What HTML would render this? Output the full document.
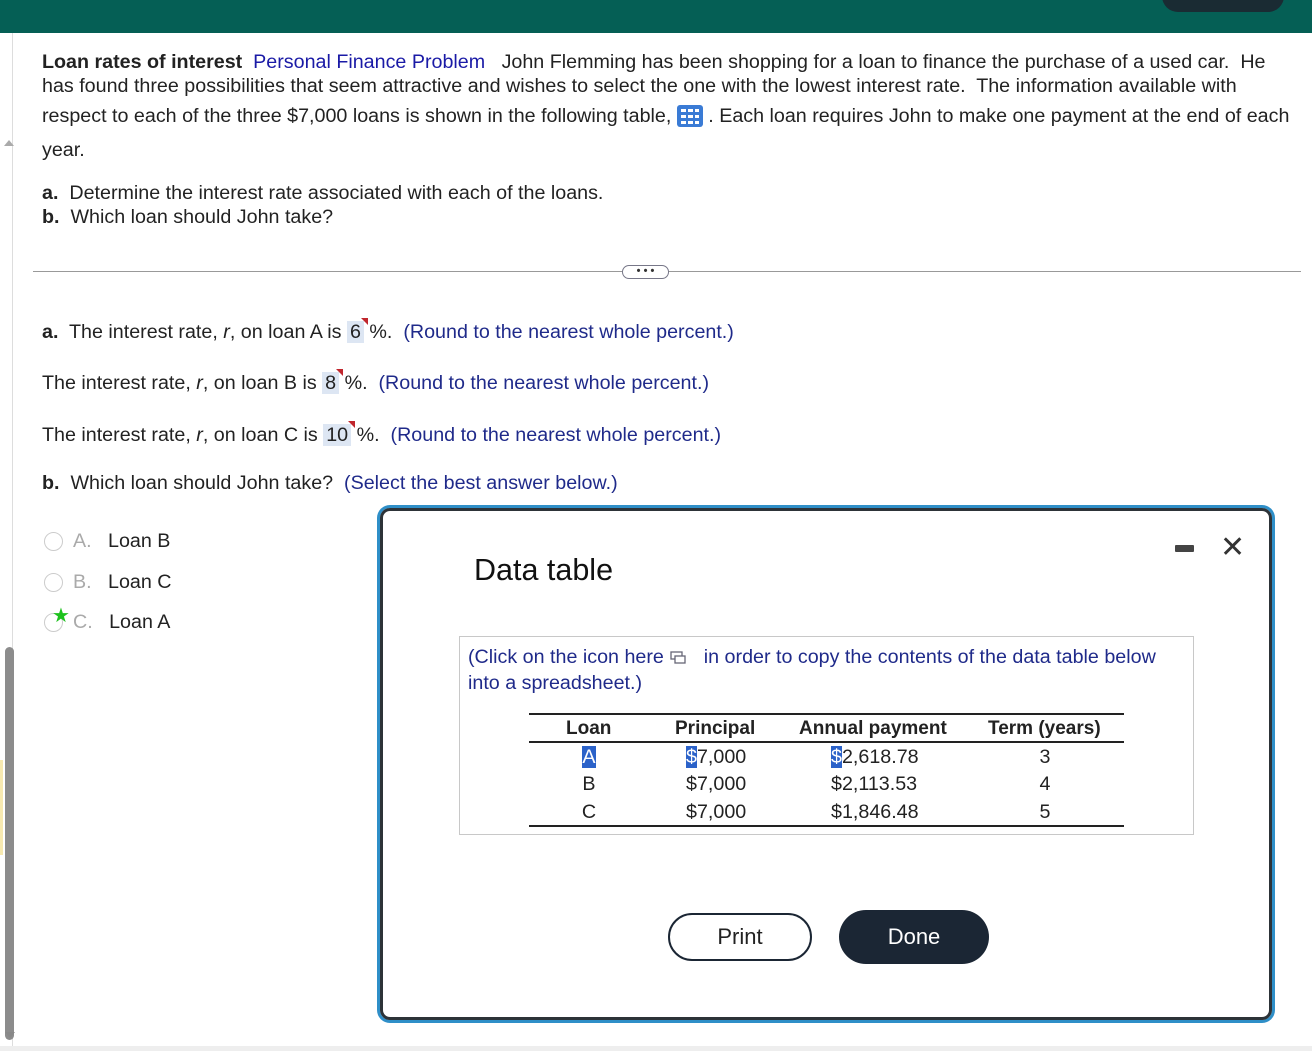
<!DOCTYPE html>
<html><head><meta charset="utf-8"><style>
*{margin:0;padding:0;box-sizing:border-box}
body{width:1312px;height:1051px;position:relative;overflow:hidden;background:#fff;font-family:"Liberation Sans",Arial,sans-serif;color:#222;font-size:19.7px}
.a{position:absolute;white-space:nowrap}
.blue{color:#1a1aa6}
.nb{color:#1f2a8a}
.hl{background:#dde6f3;padding:0 3px;position:relative}
.hl:after{content:"";position:absolute;right:-4px;top:-3px;border-left:7px solid transparent;border-top:7px solid #c0262d}
.sel{background:#2b62c9;color:#fff}
.t{font-size:19px}
</style></head><body>
<div class="a" style="left:0;top:0;width:1312px;height:33px;background:#055f55"></div>
<div class="a" style="left:1162px;top:-20px;width:122px;height:32px;background:#1a2b33;border-radius:16px"></div>
<div class="a" style="left:12px;top:33px;width:1px;height:1018px;background:#ddd"></div>
<div class="a" style="left:5px;top:647px;width:9px;height:393px;background:#8c8c8c;border-radius:5px"></div>
<div class="a" style="left:0;top:760px;width:3px;height:95px;background:#f7e9b0"></div>
<div class="a" style="left:4px;top:140px;width:0;height:0;border-left:5px solid transparent;border-right:5px solid transparent;border-bottom:6px solid #aaa"></div>
<div class="a" style="left:5px;top:1032px;width:0;height:0;border-left:5px solid transparent;border-right:5px solid transparent;border-top:6px solid #888"></div>
<div class="a" style="left:0;top:1046px;width:1312px;height:5px;background:#eee"></div>

<div class="a" style="left:42px;top:51px"><b>Loan rates of interest</b>&nbsp; <span class="blue">Personal Finance Problem</span>&nbsp;&nbsp; John Flemming has been shopping for a loan to finance the purchase of a used car.&nbsp; He</div>
<div class="a" style="left:42px;top:75px">has found three possibilities that seem attractive and wishes to select the one with the lowest interest rate.&nbsp; The information available with</div>
<div class="a" style="left:42px;top:105px">respect to each of the three $7,000 loans is shown in the following table, <span style="display:inline-block;width:26px;height:22px;vertical-align:-5px;background:#3a7bd5;border-radius:3px;position:relative"><svg width="26" height="22" style="position:absolute;left:0;top:0"><g fill="#fff"><rect x="4" y="4" width="5" height="3"/><rect x="11" y="4" width="5" height="3"/><rect x="18" y="4" width="4" height="3"/><rect x="4" y="10" width="5" height="3"/><rect x="11" y="10" width="5" height="3"/><rect x="18" y="10" width="4" height="3"/><rect x="4" y="16" width="5" height="3"/><rect x="11" y="16" width="5" height="3"/><rect x="18" y="16" width="4" height="3"/></g></svg></span> . Each loan requires John to make one payment at the end of each</div>
<div class="a" style="left:42px;top:139px">year.</div>
<div class="a" style="left:42px;top:182px"><b>a.</b>&nbsp; Determine the interest rate associated with each of the loans.</div>
<div class="a" style="left:42px;top:206px"><b>b.</b>&nbsp; Which loan should John take?</div>

<div class="a" style="left:33px;top:271px;width:1268px;height:1px;background:#999"></div>
<div class="a" style="left:622px;top:265px;width:47px;height:14px;border:1px solid #778;border-radius:7px;background:#fff;font-size:11px;line-height:10px;text-align:center;color:#333;font-weight:bold">• • •</div>

<div class="a" style="left:42px;top:321px"><b>a.</b>&nbsp; The interest rate, <i>r</i>, on loan A is <span class="hl">6</span> %.&nbsp; <span class="nb">(Round to the nearest whole percent.)</span></div>
<div class="a" style="left:42px;top:372px">The interest rate, <i>r</i>, on loan B is <span class="hl">8</span> %.&nbsp; <span class="nb">(Round to the nearest whole percent.)</span></div>
<div class="a" style="left:42px;top:424px">The interest rate, <i>r</i>, on loan C is <span class="hl">10</span> %.&nbsp; <span class="nb">(Round to the nearest whole percent.)</span></div>
<div class="a" style="left:42px;top:472px"><b>b.</b>&nbsp; Which loan should John take?&nbsp; <span class="nb">(Select the best answer below.)</span></div>

<div class="a" style="left:44px;top:532px;width:19px;height:19px;border:1.5px solid #ccc;border-radius:50%"></div>
<div class="a" style="left:73px;top:530px"><span style="color:#aaa">A.</span>&nbsp;&nbsp; Loan B</div>
<div class="a" style="left:44px;top:573px;width:19px;height:19px;border:1.5px solid #ccc;border-radius:50%"></div>
<div class="a" style="left:73px;top:571px"><span style="color:#aaa">B.</span>&nbsp;&nbsp; Loan C</div>
<div class="a" style="left:44px;top:613px;width:19px;height:19px;border:1.5px solid #ccc;border-radius:50%"></div>
<div class="a" style="left:52px;top:603px;color:#1ec21e;font-size:20px">★</div>
<div class="a" style="left:73px;top:611px"><span style="color:#aaa">C.</span>&nbsp;&nbsp; Loan A</div>

<div class="a" style="left:380px;top:508px;width:892px;height:512px;border:3px solid #2d3338;border-radius:10px;box-shadow:0 0 0 3px #2f8fc8"></div>
<div class="a" style="left:474px;top:553px;font-size:30.5px;color:#111">Data table</div>
<div class="a" style="left:1175px;top:545px;width:19px;height:7px;background:#444;border-radius:1px"></div>
<div class="a" style="left:1220px;top:530px;font-size:30px;color:#333;font-weight:300">✕</div>

<div class="a" style="left:459px;top:636px;width:735px;height:199px;border:1px solid #c8c8c8"></div>
<div class="a nb" style="left:468px;top:646px">(Click on the icon here <svg width="18" height="16" style="vertical-align:-2px"><rect x="2" y="3" width="11" height="7" fill="none" stroke="#667" stroke-width="1.3"/><rect x="6" y="7" width="10" height="7" fill="#fff" stroke="#667" stroke-width="1.3"/></svg>&nbsp;&nbsp; in order to copy the contents of the data table below</div>
<div class="a nb" style="left:468px;top:672px">into a spreadsheet.)</div>
<div class="a" style="left:529px;top:713px;width:595px;height:2px;background:#222"></div>
<div class="a" style="left:529px;top:741px;width:595px;height:2px;background:#222"></div>
<div class="a" style="left:529px;top:825px;width:595px;height:2px;background:#222"></div>
<div class="a t" style="left:566px;top:718px;font-weight:bold">Loan</div>
<div class="a t" style="left:675px;top:718px;font-weight:bold">Principal</div>
<div class="a t" style="left:799px;top:718px;font-weight:bold">Annual payment</div>
<div class="a t" style="left:988px;top:718px;font-weight:bold">Term (years)</div>
<div class="a" style="left:579px;top:746px;width:20px;text-align:center"><span class="sel">A</span></div>
<div class="a" style="left:579px;top:773px;width:20px;text-align:center">B</div>
<div class="a" style="left:579px;top:801px;width:20px;text-align:center">C</div>
<div class="a" style="left:686px;top:746px"><span class="sel">$</span>7,000</div>
<div class="a" style="left:686px;top:773px">$7,000</div>
<div class="a" style="left:686px;top:801px">$7,000</div>
<div class="a" style="left:831px;top:746px"><span class="sel">$</span>2,618.78</div>
<div class="a" style="left:831px;top:773px">$2,113.53</div>
<div class="a" style="left:831px;top:801px">$1,846.48</div>
<div class="a" style="left:1035px;top:746px;width:20px;text-align:center">3</div>
<div class="a" style="left:1035px;top:773px;width:20px;text-align:center">4</div>
<div class="a" style="left:1035px;top:801px;width:20px;text-align:center">5</div>

<div class="a" style="left:668px;top:913px;width:144px;height:48px;border:2px solid #1b2634;border-radius:24px;text-align:center;line-height:44px;font-size:22px">Print</div>
<div class="a" style="left:839px;top:910px;width:150px;height:54px;background:#1b2634;border-radius:27px;text-align:center;line-height:54px;font-size:22px;color:#fff">Done</div>
</body></html>
